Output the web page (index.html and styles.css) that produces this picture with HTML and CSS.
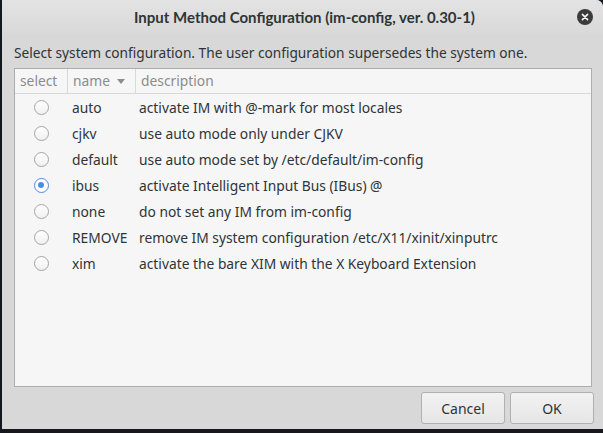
FILE: index.html
```html
<!DOCTYPE html>
<html>
<head>
<meta charset="utf-8">
<link rel="stylesheet" href="styles.css">
</head>
<body>
<div class="window">
  <div class="titlebar">
    <span class="title">Input Method Configuration (im-config, ver. 0.30-1)</span>
    <span class="close"><svg width="16" height="16" viewBox="0 0 16 16"><circle cx="8" cy="8" r="8" fill="#3b3b3b"/><path d="M5.4 5.4 L10.6 10.6 M10.6 5.4 L5.4 10.6" stroke="#fff" stroke-width="1.5" stroke-linecap="round"/></svg></span>
  </div>
  <div class="content">
    <div class="label">Select system configuration. The user configuration supersedes the system one.</div>
    <div class="tree">
      <div class="head">
        <div class="hc c1">select</div>
        <div class="hc c2">name <span class="arrow"></span></div>
        <div class="hc c3">description</div>
      </div>
      <div class="row"><div class="c1"><span class="radio"></span></div><div class="c2">auto</div><div class="c3">activate IM with @-mark for most locales</div></div>
      <div class="row"><div class="c1"><span class="radio"></span></div><div class="c2">cjkv</div><div class="c3">use auto mode only under CJKV</div></div>
      <div class="row"><div class="c1"><span class="radio"></span></div><div class="c2">default</div><div class="c3">use auto mode set by /etc/default/im-config</div></div>
      <div class="row"><div class="c1"><span class="radio on"></span></div><div class="c2">ibus</div><div class="c3">activate Intelligent Input Bus (IBus) @</div></div>
      <div class="row"><div class="c1"><span class="radio"></span></div><div class="c2">none</div><div class="c3">do not set any IM from im-config</div></div>
      <div class="row"><div class="c1"><span class="radio"></span></div><div class="c2">REMOVE</div><div class="c3">remove IM system configuration /etc/X11/xinit/xinputrc</div></div>
      <div class="row"><div class="c1"><span class="radio"></span></div><div class="c2">xim</div><div class="c3">activate the bare XIM with the X Keyboard Extension</div></div>
    </div>
    <div class="buttons">
      <button class="btn">Cancel</button>
      <button class="btn">OK</button>
    </div>
  </div>
</div>
</body>
</html>
```
FILE: styles.css
```css
html, body {
  margin: 0;
  padding: 0;
  background: #15191d;
  width: 603px;
  height: 433px;
  overflow: hidden;
}
.window {
  margin-left: 2px;
  width: 601px;
  height: 429px;
  background: #d6d6d6;
  border-radius: 0 7px 0 0;
  display: flex;
  flex-direction: column;
  font-family: "Noto Sans", "DejaVu Sans", sans-serif;
  color: #2e3436;
}
.titlebar {
  height: 34px;
  flex: none;
  display: flex;
  align-items: center;
  justify-content: center;
  position: relative;
  background: linear-gradient(#e3e3e3, #d9d9d9);
  border-radius: 0 7px 0 0;
}
.title {
  font-family: "Lato", "Noto Sans", sans-serif;
  font-size: 15px;
  font-weight: 700;
  color: #2e3436;
  margin-left: 4px;
  margin-top: -1px;
}
.close {
  position: absolute;
  right: 10px;
  top: 9px;
  width: 16px;
  height: 16px;
  display: block;
}
.close svg { display: block; }
.content {
  flex: 1;
  display: flex;
  flex-direction: column;
  padding: 9px 11px 4px 12px;
  background: #d8d8d8;
}
.label {
  font-size: 13.7px;
  line-height: 20px;
  margin-bottom: 5px;
  color: #2e3436;
}
.tree {
  height: 317px;
  border: 1px solid #adadad;
  background: #f6f6f6;
  font-size: 13.8px;
}
.head {
  display: flex;
  height: 24px;
  border-bottom: 1px solid #d9d9d9;
  color: #8c8c8c;
}
.hc {
  line-height: 24px;
  padding-left: 5px;
  box-sizing: border-box;
}
.head .c1, .head .c2 { border-right: 1px solid #d9d9d9; }
.c1 { width: 53px; flex: none; }
.c2 { width: 68px; flex: none; }
.c3 { flex: 1; }
.arrow {
  display: inline-block;
  width: 0; height: 0;
  border-left: 4px solid transparent;
  border-right: 4px solid transparent;
  border-top: 5px solid #8c8c8c;
  vertical-align: middle;
  margin-left: 3px;
  margin-top: -2px;
}
.row {
  display: flex;
  height: 26px;
  align-items: center;
}
.row .c1 { display: flex; justify-content: center; padding-left: 0; }
.row .c2 { padding-left: 4px; box-sizing: border-box; }
.row .c3 { padding-left: 3px; }
.radio {
  width: 13px;
  height: 13px;
  border: 1px solid #a5a5a5;
  border-radius: 50%;
  background: linear-gradient(#ffffff, #f0f0f0);
  display: inline-block;
  position: relative;
  box-sizing: content-box;
  margin-left: -1px;
}
.radio.on { border-color: #4a90d9; background: #fff; }
.radio.on::after {
  content: "";
  position: absolute;
  left: 3.5px; top: 3.5px;
  width: 6px; height: 6px;
  border-radius: 50%;
  background: #4a90d9;
}
.buttons {
  display: flex;
  justify-content: flex-end;
  gap: 5px;
  margin-top: 5px;
  margin-right: -2px;
}
.btn {
  width: 84px;
  height: 32px;
  border: 1px solid #b0b0b0;
  border-radius: 3px;
  background: linear-gradient(#f2f2f2, #e6e6e6);
  font-family: "Noto Sans", "DejaVu Sans", sans-serif;
  font-size: 14px;
  color: #2e3436;
  padding: 0;
}
```
